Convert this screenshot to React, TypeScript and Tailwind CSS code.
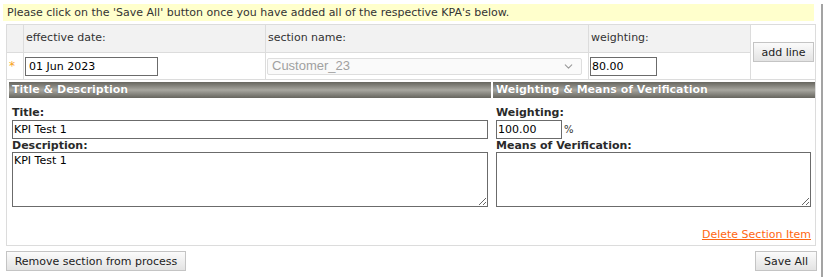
import { ChevronDown } from "lucide-react";

const font = { fontFamily: '"DejaVu Sans", Verdana, Tahoma, sans-serif' };

function Btn({ label, className }: { label: string; className: string }) {
  return (
    <button
      className={`h-[20px] border border-[#c4c4c4] bg-gradient-to-b from-[#fbfbfb] to-[#e3e3e3] text-[11px] leading-none text-[#222] ${className}`}
    >
      {label}
    </button>
  );
}

export default function App() {
  return (
    <div className="w-[824px] h-[277px] bg-white overflow-hidden" style={font}>
      <div className="w-[823px] h-full border-r-2 border-[#a3a3a3]">
        <div className="mt-[4px] ml-[3px] w-[811px] h-[17px] bg-[#ffffcc] pl-[4px] text-[11px] leading-[17px] text-[#333]">
          Please click on the 'Save All' button once you have added all of the respective KPA's below.
        </div>

        <div className="mt-[3px] ml-[6px] w-[810px] border border-[#dcdcdc]">
          <div className="grid grid-cols-[16px_241px_322px_161px_64px] grid-rows-[27px_26px] gap-px pb-px bg-[#dcdcdc] text-[11px] text-[#333]">
            <div className="bg-[#f2f2f2]" />
            <div className="bg-[#f2f2f2] flex items-center pl-[2px]">effective date:</div>
            <div className="bg-[#f2f2f2] flex items-center pl-[2px]">section name:</div>
            <div className="bg-[#f2f2f2] flex items-center pl-[2px]">weighting:</div>
            <div className="row-span-2 bg-white flex items-center">
              <Btn label="add line" className="ml-[2px] w-[61px]" />
            </div>

            <div className="bg-white flex items-center pl-[2px] text-[#f7a21b] text-[12px]">*</div>
            <div className="bg-white flex items-center">
              <input
                defaultValue="01 Jun 2023"
                className="ml-[1px] w-[133px] h-[19px] border border-[#6b6b6b] px-[3px] text-[11px] text-black outline-none"
              />
            </div>
            <div className="bg-white flex items-center">
              <div className="ml-[1px] w-[315px] h-[17px] border border-[#dedede] rounded-[2px] bg-[#fafafa] flex items-center justify-between pl-[4px] pr-[6px]">
                <span className="text-[13px] text-[#a0a0a0]" style={{ fontFamily: '"Liberation Sans", Arial, sans-serif' }}>
                  Customer_23
                </span>
                <ChevronDown className="w-[13px] h-[13px] text-[#9a9a9a]" strokeWidth={2} />
              </div>
            </div>
            <div className="bg-white flex items-center">
              <input
                defaultValue="80.00"
                className="ml-[1px] w-[67px] h-[19px] border border-[#6b6b6b] px-[1px] text-[11px] text-black outline-none"
              />
            </div>
          </div>

          <div className="h-[165px] pt-[2px] pl-[2px] flex flex-col">
            <div className="grid grid-cols-[482px_322px] gap-[2px] h-[16px] text-[11px] font-bold text-white">
              <div className="bg-gradient-to-b from-[#66655e] via-[#a8a7a0] to-[#66655e] pl-[3px] leading-[16px] [text-shadow:0_0_1px_#555]">
                Title &amp; Description
              </div>
              <div className="bg-gradient-to-b from-[#66655e] via-[#a8a7a0] to-[#66655e] pl-[3px] leading-[16px] [text-shadow:0_0_1px_#555]">
                Weighting &amp; Means of Verification
              </div>
            </div>

            <div className="grid grid-cols-[482px_322px] gap-[2px] mt-[8px] text-[11px]">
              <div className="pl-[3px] flex flex-col">
                <div className="h-[13px] leading-[13px] font-bold text-[#2a2a2a]">Title:</div>
                <input
                  defaultValue="KPI Test 1"
                  className="mt-[1px] w-[476px] h-[19px] border border-[#6b6b6b] px-[1px] text-[11px] text-black outline-none"
                />
                <div className="h-[13px] leading-[13px] font-bold text-[#2a2a2a]">Description:</div>
                <textarea
                  defaultValue="KPI Test 1"
                  className="w-[476px] h-[55px] border border-[#6b6b6b] px-[1px] py-0 text-[11px] text-black outline-none"
                />
              </div>
              <div className="pl-[3px] flex flex-col">
                <div className="h-[13px] leading-[13px] font-bold text-[#2a2a2a]">Weighting:</div>
                <div className="mt-[1px] flex items-center">
                  <input
                    defaultValue="100.00"
                    className="w-[66px] h-[19px] border border-[#6b6b6b] px-[1px] text-[11px] text-black outline-none"
                  />
                  <span className="ml-[2px] text-[10px] text-[#333]">%</span>
                </div>
                <div className="h-[13px] leading-[13px] font-bold text-[#2a2a2a]">Means of Verification:</div>
                <textarea className="w-[315px] h-[55px] border border-[#6b6b6b] px-[1px] py-0 text-[11px] outline-none" />
              </div>
            </div>

            <div className="mt-[21px] flex justify-end pr-[4px]">
              <a href="#" className="text-[11px] leading-[14px] text-[#ff6611] underline">
                Delete Section Item
              </a>
            </div>
          </div>
        </div>

        <div className="mt-[5px] ml-[6px] w-[811px] flex justify-between">
          <Btn label="Remove section from process" className="w-[180px]" />
          <Btn label="Save All" className="w-[62px]" />
        </div>
      </div>
    </div>
  );
}
